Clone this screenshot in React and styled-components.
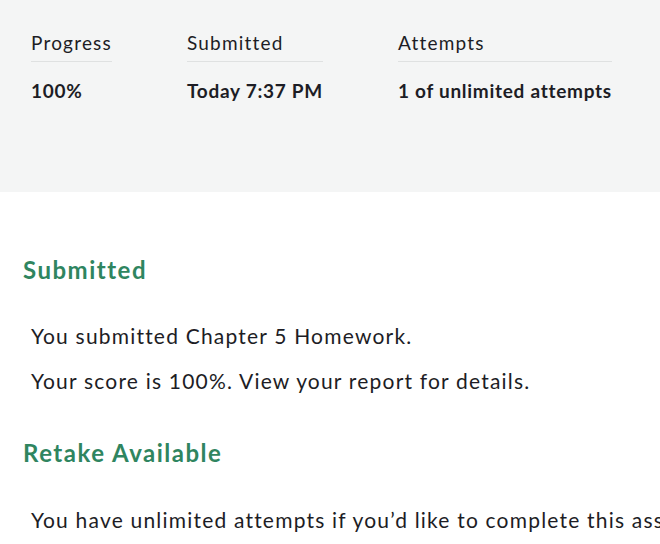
import React from "react";
import styled, { createGlobalStyle } from "styled-components";

const Global = createGlobalStyle`
  html, body { margin: 0; padding: 0; background: #ffffff; }
  body { font-family: Lato, "Noto Sans", sans-serif; color: #1d1d25; overflow: hidden; }
`;

const Page = styled.div`
  width: 660px;
  height: 544px;
  overflow: hidden;
`;

const Summary = styled.section`
  background: #f4f5f5;
  height: 192px;
  box-sizing: border-box;
  padding: 31px 0 0 31px;
  display: flex;
  gap: 75px;
  align-items: flex-start;
`;

const Stat = styled.div`
  display: flex;
  flex-direction: column;
`;

const StatLabel = styled.div`
  font-size: 19px;
  letter-spacing: 1.2px;
  line-height: 24px;
  padding-bottom: 6px;
  border-bottom: 1px solid #dfe1e1;
  white-space: nowrap;
`;

const StatValue = styled.div`
  font-size: 19px;
  font-weight: 700;
  letter-spacing: 0.72px;
  line-height: 24px;
  margin-top: 17px;
  white-space: nowrap;
`;

const Content = styled.main`
  padding: 62px 0 0 23px;
`;

const Heading = styled.h2`
  margin: 0;
  font-size: 24px;
  font-weight: 700;
  letter-spacing: 1.5px;
  line-height: 32px;
  color: #2f8560;
`;

const Paragraphs = styled.div`
  padding: ${p => p.$top}px 0 0 8px;
  display: flex;
  flex-direction: column;
  gap: 21px;
  margin-bottom: ${p => p.$bottom}px;
`;

const Para = styled.p`
  margin: 0;
  font-size: 21px;
  letter-spacing: 1.2px;
  line-height: 24px;
  white-space: nowrap;
`;

const stats = [
  { label: "Progress", value: "100%" },
  { label: "Submitted", value: "Today 7:37 PM" },
  { label: "Attempts", value: "1 of unlimited attempts" },
];

export default function App() {
  return (
    <Page>
      <Global />
      <Summary>
        {stats.map(s => (
          <Stat key={s.label}>
            <StatLabel>{s.label}</StatLabel>
            <StatValue>{s.value}</StatValue>
          </Stat>
        ))}
      </Summary>
      <Content>
        <Heading>Submitted</Heading>
        <Paragraphs $top={38} $bottom={44}>
          <Para>You submitted Chapter 5 Homework.</Para>
          <Para>Your score is 100%. View your report for details.</Para>
        </Paragraphs>
        <Heading>Retake Available</Heading>
        <Paragraphs $top={39} $bottom={0}>
          <Para>You have unlimited attempts if you’d like to complete this assignment again.</Para>
        </Paragraphs>
      </Content>
    </Page>
  );
}
